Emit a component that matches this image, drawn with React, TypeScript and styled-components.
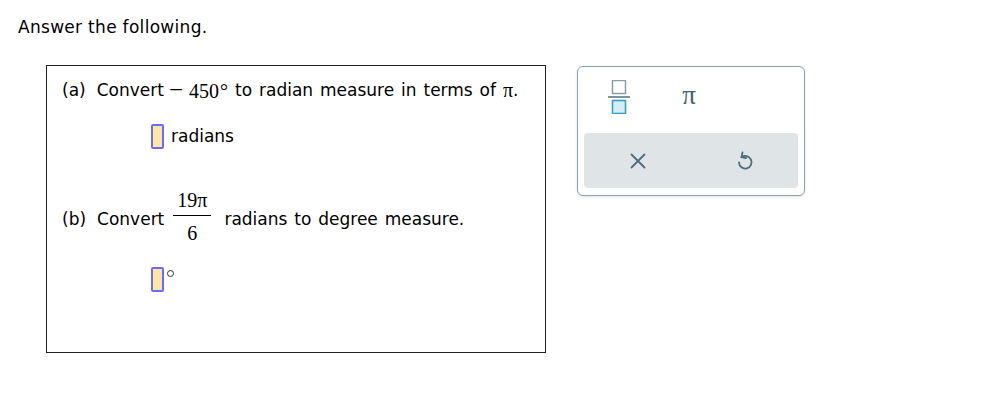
import React from 'react';
import styled, { createGlobalStyle } from 'styled-components';

const GlobalStyle = createGlobalStyle`
  html, body {
    margin: 0;
    padding: 0;
    background: #fff;
  }
  body {
    font-family: "DejaVu Sans", Verdana, sans-serif;
    color: #000;
  }
`;

const COLOR_ICON = '#4b6c79';

const Page = styled.div`
  width: 990px;
  height: 413px;
  padding: 15px 0 0 18px;
  box-sizing: border-box;
`;

const Prompt = styled.div`
  font-size: 17px;
  line-height: 24px;
  height: 24px;
  letter-spacing: 0.3px;
`;

const Workspace = styled.div`
  display: flex;
  align-items: flex-start;
  margin-top: 26px;
  margin-left: 28px;
  gap: 31px;
`;

const QuestionBox = styled.div`
  width: 500px;
  height: 288px;
  box-sizing: border-box;
  border: 1px solid #222;
  padding: 12px 0 0 15px;
  font-size: 17px;
  word-spacing: 1.5px;
`;

const Line = styled.div<{ $top?: number }>`
  display: flex;
  align-items: center;
  height: 24px;
  line-height: 24px;
  margin-top: ${p => p.$top ?? 0}px;
  white-space: pre;
`;

const Label = styled.span`
  margin-right: 11px;
`;

const MathExpr = styled.span<{ $lead?: number }>`
  display: inline-flex;
  align-items: baseline;
  margin-left: ${p => p.$lead ?? 0}px;
  font-family: "Liberation Serif", "Times New Roman", serif;
  font-size: 20px;
`;

const MathOp = styled.span`
  margin-right: 6px;
  font-size: 25px;
  line-height: 1;
`;

const MathSup = styled.span`
  margin: 0 7px 0 1px;
  font-size: 20px;
  line-height: 1;
`;

const Fraction = styled.span`
  display: inline-flex;
  flex-direction: column;
  align-items: center;
  margin: 0 13px 0 9px;
  font-family: "Liberation Serif", "Times New Roman", serif;
  font-size: 20px;
  line-height: 22px;
  transform: translateY(-3px);
`;

const Numer = styled.span`
  padding: 0 4px 4px;
  border-bottom: 1px solid #000;
`;

const Denom = styled.span`
  padding-top: 6px;
`;

const AnswerRow = styled.div<{ $top: number }>`
  display: flex;
  align-items: flex-start;
  margin-top: ${p => p.$top}px;
  margin-left: 89px;
  height: 25px;
`;

const Blank = styled.span`
  display: inline-block;
  width: 13px;
  height: 25px;
  box-sizing: border-box;
  border: 2px solid #6b6bf5;
  border-radius: 2px;
  background: #fbe7a5;
`;

const Unit = styled.span`
  margin-left: 7px;
  line-height: 25px;
`;

const Degree = styled.span`
  display: inline-block;
  width: 5px;
  height: 5px;
  margin: 3px 0 0 3px;
  border: 1px solid #333;
  border-radius: 50%;
`;

const Keypad = styled.div`
  width: 228px;
  margin-top: 1px;
  box-sizing: border-box;
  border: 1px solid #8da2ac;
  border-radius: 6px;
  padding: 0 6px 7px;
  box-shadow: 0 1px 3px rgba(0, 0, 0, 0.12);
  background: #fff;
`;

const KeyRow = styled.div`
  display: grid;
  grid-template-columns: repeat(3, 1fr);
  height: 60px;
  padding-bottom: 6px;
  padding-right: 4px;
`;

const Key = styled.div`
  display: flex;
  align-items: center;
  justify-content: center;
`;

const PiKey = styled(Key)`
  font-family: "Liberation Serif", "Times New Roman", serif;
  font-size: 27px;
  color: #45626e;
  padding-bottom: 4px;
`;

const ActionBar = styled.div`
  display: grid;
  grid-template-columns: 1fr 1fr;
  height: 55px;
  background: #dfe4e7;
  border-radius: 4px;
`;

const FracIcon = () => (
  <svg width="22" height="34" viewBox="0 0 22 34">
    <rect x="4.5" y="0.5" width="13" height="13" fill="#fff" stroke="#8b9ea6" strokeWidth="1.5" />
    <rect x="0" y="16" width="22" height="2" fill="#7f939c" />
    <rect x="4.5" y="20.5" width="13" height="13" fill="#d3eef4" stroke="#3a9fbe" strokeWidth="1.6" />
  </svg>
);

const CloseIcon = () => (
  <svg width="16" height="16" viewBox="0 0 16 16">
    <path d="M1.5 1.5 L14.5 14.5 M14.5 1.5 L1.5 14.5" stroke={COLOR_ICON} strokeWidth="1.8" strokeLinecap="round" />
  </svg>
);

const UndoIcon = () => (
  <svg width="18" height="20" viewBox="0 0 18 20">
    <path
      d="M5.5 6.2 A6.3 6.3 0 1 1 3 11.5"
      fill="none"
      stroke={COLOR_ICON}
      strokeWidth="1.8"
      strokeLinecap="round"
    />
    <path
      d="M6.5 1.5 L5.5 6.2 L10 7"
      fill="none"
      stroke={COLOR_ICON}
      strokeWidth="1.8"
      strokeLinecap="round"
      strokeLinejoin="round"
    />
  </svg>
);

export default function App() {
  return (
    <>
      <GlobalStyle />
      <Page>
        <Prompt>Answer the following.</Prompt>
        <Workspace>
          <QuestionBox>
            <Line>
              <Label>(a)</Label>
              Convert
              <MathExpr $lead={5}>
                <MathOp>−</MathOp>450<MathSup>°</MathSup>
              </MathExpr>{' '}
              to radian measure in terms of <MathExpr>π</MathExpr>.
            </Line>
            <AnswerRow $top={22}>
              <Blank />
              <Unit>radians</Unit>
            </AnswerRow>
            <Line $top={58}>
              <Label>(b)</Label>
              Convert
              <Fraction>
                <Numer>19π</Numer>
                <Denom>6</Denom>
              </Fraction>
              radians to degree measure.
            </Line>
            <AnswerRow $top={36}>
              <Blank />
              <Degree />
            </AnswerRow>
          </QuestionBox>
          <Keypad>
            <KeyRow>
              <Key>
                <FracIcon />
              </Key>
              <PiKey>π</PiKey>
              <Key />
            </KeyRow>
            <ActionBar>
              <Key>
                <CloseIcon />
              </Key>
              <Key>
                <UndoIcon />
              </Key>
            </ActionBar>
          </Keypad>
        </Workspace>
      </Page>
    </>
  );
}
